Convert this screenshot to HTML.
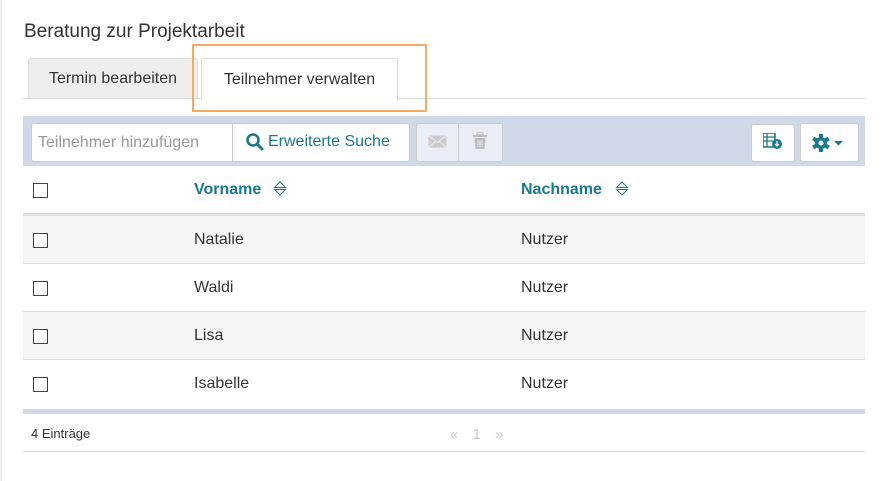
<!DOCTYPE html>
<html><head><style>
body{margin:0;width:890px;height:481px;background:#fff;font-family:"Liberation Sans",sans-serif;position:relative;overflow:hidden;color:#333}
.a{position:absolute}
.cb{position:absolute;left:33px;width:13px;height:13px;border:1px solid #444;background:#fff}
.row{position:absolute;left:23px;width:842px;height:47px;border-bottom:1px solid #ddd;font-size:16px}
.row span{position:absolute;top:15px}
</style></head><body>
<div class="a" style="left:0;top:0;width:2px;height:481px;background:#eee"></div>
<div class="a" style="left:24px;top:21px;font-size:19px;color:#333">Beratung zur Projektarbeit</div>
<div class="a" style="left:28px;top:58px;width:168px;height:40px;background:#eee;border:1px solid #ddd;border-bottom:none;border-radius:3px 3px 0 0;font-size:16px;text-align:center;line-height:40px">Termin bearbeiten</div>
<div class="a" style="left:23px;top:98px;width:842px;height:1px;background:#ddd"></div>
<div class="a" style="left:201px;top:58px;width:195px;height:41px;background:#fff;border:1px solid #ddd;border-bottom:none;border-radius:3px 3px 0 0;font-size:16px;text-align:center;line-height:41px">Teilnehmer verwalten</div>
<div class="a" style="left:192px;top:44px;width:231px;height:64px;border:2px solid #f5ab63"></div>
<div class="a" style="left:23px;top:116px;width:842px;height:50px;background:#cfd9e7"></div>
<div class="a" style="left:31px;top:123px;width:377px;height:37px;background:#fff;border:1px solid #ccc;border-radius:3px"></div>
<div class="a" style="left:232px;top:123px;width:1px;height:39px;background:#ccc"></div>
<div class="a" style="left:38px;top:134px;font-size:16px;color:#999">Teilnehmer hinzufügen</div>
<svg class="a" style="left:245px;top:132px" width="20" height="20" viewBox="0 0 20 20"><circle cx="8" cy="8" r="5.5" fill="none" stroke="#19798f" stroke-width="2.6"/><path d="M12 12l5 5" stroke="#19798f" stroke-width="3" stroke-linecap="round"/></svg>
<div class="a" style="left:268px;top:133px;font-size:16px;color:#19798f">Erweiterte Suche</div>
<div class="a" style="left:416px;top:123px;width:85px;height:37px;background:#eaeef6;border:1px solid #ccc;border-radius:3px"></div>
<div class="a" style="left:458px;top:123px;width:1px;height:39px;background:#ccc"></div>
<svg class="a" style="left:428px;top:135px" width="20" height="14"><rect x="0.5" y="0.5" width="18" height="12" fill="#ccc"/><path d="M0.5 0.5l9 7 9-7M0.5 12.5l7-6M18.5 12.5l-7-6" stroke="#eee" fill="none"/></svg>
<svg class="a" style="left:472px;top:132px" width="16" height="18"><rect x="1" y="3" width="14" height="2" fill="#bbb"/><rect x="5" y="0" width="6" height="3" fill="none" stroke="#bbb"/><path d="M2.5 6h11l-1 11h-9z" fill="#bbb"/><path d="M6 8v7M8 8v7M10 8v7" stroke="#eaeef6"/></svg>
<div class="a" style="left:751px;top:124px;width:42px;height:36px;background:#fff;border:1px solid #ccc;border-radius:3px"></div>
<svg class="a" style="left:763px;top:133px" width="20" height="18"><rect x="0" y="0" width="12" height="14" fill="none" stroke="#19798f" stroke-width="1.5"/><path d="M0 4h12M0 8h10M4 0v14" stroke="#19798f" stroke-width="1.3"/><circle cx="14" cy="11" r="5" fill="#19798f"/><path d="M14 8v5M12 11l2 2 2-2" stroke="#fff" stroke-width="1.2" fill="none"/></svg>
<div class="a" style="left:800px;top:123px;width:57px;height:37px;background:#fff;border:1px solid #ccc;border-radius:3px"></div>
<svg class="a" style="left:812px;top:133px" width="36" height="20" viewBox="0 0 36 20"><g transform="translate(9,10)" fill="#19798f"><circle r="6"/><rect x="-2" y="-9" width="4" height="18"/><rect x="-2" y="-9" width="4" height="18" transform="rotate(60)"/><rect x="-2" y="-9" width="4" height="18" transform="rotate(120)"/><circle r="2.5" fill="#fff"/></g><path d="M22 8h9l-4.5 4.5z" fill="#19798f"/></svg>
<div class="cb" style="top:183px"></div>
<div class="a" style="left:194px;top:181px;font-size:16px;font-weight:bold;color:#19798f">Vorname</div>
<svg class="a" style="left:273px;top:181px" width="14" height="15"><path d="M1.5 6.5L7 1l5.5 5.5zM1.5 8.5L7 14l5.5-5.5z" fill="none" stroke="#19798f" stroke-width="1"/></svg>
<div class="a" style="left:521px;top:181px;font-size:16px;font-weight:bold;color:#19798f">Nachname</div>
<svg class="a" style="left:615px;top:181px" width="14" height="15"><path d="M1.5 6.5L7 1l5.5 5.5zM1.5 8.5L7 14l5.5-5.5z" fill="none" stroke="#19798f" stroke-width="1"/></svg>
<div class="a" style="left:23px;top:213px;width:842px;height:3px;background:#ddd"></div>
<div class="row" style="top:216px;background:#f5f5f5"><span style="left:171px">Natalie</span><span style="left:498px">Nutzer</span></div>
<div class="row" style="top:264px"><span style="left:171px">Waldi</span><span style="left:498px">Nutzer</span></div>
<div class="row" style="top:312px;background:#f5f5f5"><span style="left:171px">Lisa</span><span style="left:498px">Nutzer</span></div>
<div class="row" style="top:360px;border:none"><span style="left:171px">Isabelle</span><span style="left:498px">Nutzer</span></div>
<div class="cb" style="top:233px"></div>
<div class="cb" style="top:281px"></div>
<div class="cb" style="top:329px"></div>
<div class="cb" style="top:377px"></div>
<div class="a" style="left:23px;top:409px;width:842px;height:5px;background:#cfd9e7"></div>
<div class="a" style="left:31px;top:426px;font-size:13px;color:#333">4 Einträge</div>
<div class="a" style="left:450px;top:426px;font-size:15px;color:#ccc;word-spacing:10px">« 1 »</div>
<div class="a" style="left:23px;top:451px;width:842px;height:1px;background:#ddd"></div>
</body></html>
